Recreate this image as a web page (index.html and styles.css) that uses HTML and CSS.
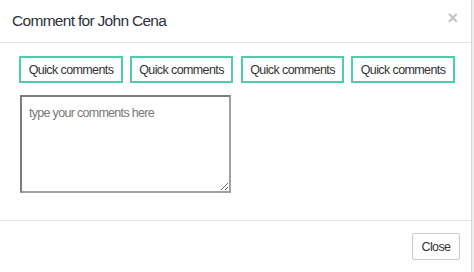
FILE: index.html
```html
<!DOCTYPE html>
<html>
<head>
  <meta name="viewport" content="width=device-width, initial-scale=1.0">
  <title>Comment</title>
  <link rel="stylesheet" href="styles.css">
</head>
<body>
  <div class="modal">
    <div class="modal-header">
      <h4 class="modal-title">Comment for John Cena</h4>
      <span class="close-x">&times;</span>
    </div>
    <div class="modal-body">
      <div class="quick-row">
        <button class="quick-btn">Quick comments</button>
        <button class="quick-btn">Quick comments</button>
        <button class="quick-btn">Quick comments</button>
        <button class="quick-btn">Quick comments</button>
      </div>
      <textarea class="comment-box" placeholder="type your comments here"></textarea>
    </div>
    <div class="modal-footer">
      <button class="close-btn">Close</button>
    </div>
  </div>
</body>
</html>
```

FILE: styles.css
```css
html, body {
  margin: 0;
  padding: 0;
  height: 100%;
  background-color: #eeeeee;
  font-family: "Liberation Sans", Arial, sans-serif;
}
.modal {
  width: 471px;
  height: 272px;
  background-color: #ffffff;
  border-right: 1px solid #d8d8d8;
  display: flex;
  flex-direction: column;
}
.modal-header {
  height: 42px;
  border-bottom: 1px solid #e5e5e5;
  display: flex;
  align-items: center;
  justify-content: space-between;
  padding: 0 13px 0 12px;
}
.modal-title {
  margin: 0;
  font-size: 15.5px;
  letter-spacing: -0.7px;
  font-weight: normal;
  color: #2b3240;
  padding-bottom: 1px;
}
.close-x {
  font-size: 18px;
  font-weight: bold;
  color: #c4c4c4;
  margin-bottom: 6px;
}
.modal-body {
  height: 178px;
  border-bottom: 1px solid #e5e5e5;
  padding: 13px 0 0 19px;
  box-sizing: border-box;
}
.quick-row {
  display: flex;
  gap: 7px;
}
.quick-btn {
  width: 104px;
  height: 27px;
  background-color: #ffffff;
  border: 2px solid #4fcbb0;
  color: #333333;
  font-family: "Liberation Sans", Arial, sans-serif;
  font-size: 12.5px;
  letter-spacing: -0.6px;
  padding: 0;
}
.quick-btn:nth-child(2) { width: 103px; }
.quick-btn:nth-child(3) { margin-left: 1px; width: 103px; }
.comment-box {
  display: block;
  margin: 12px 0 0 1px;
  width: 211px;
  height: 98px;
  box-sizing: border-box;
  border: 2px solid #8a8a8a;
  border-color: #7d7d7d #a0a0a0 #a0a0a0 #7d7d7d;
  padding: 9px 7px;
  font-family: "Liberation Sans", Arial, sans-serif;
  font-size: 12.5px;
  letter-spacing: -0.7px;
  color: #333333;
  resize: vertical;
}
.comment-box::placeholder {
  color: #7a7a7a;
}
.modal-footer {
  display: flex;
  justify-content: flex-end;
  padding: 12px 11px 0 0;
}
.close-btn {
  width: 48px;
  height: 27px;
  background-color: #ffffff;
  border: 1px solid #cccccc;
  border-radius: 2px;
  color: #333333;
  font-family: "Liberation Sans", Arial, sans-serif;
  font-size: 12.5px;
  letter-spacing: -0.6px;
  padding: 0;
}
```
